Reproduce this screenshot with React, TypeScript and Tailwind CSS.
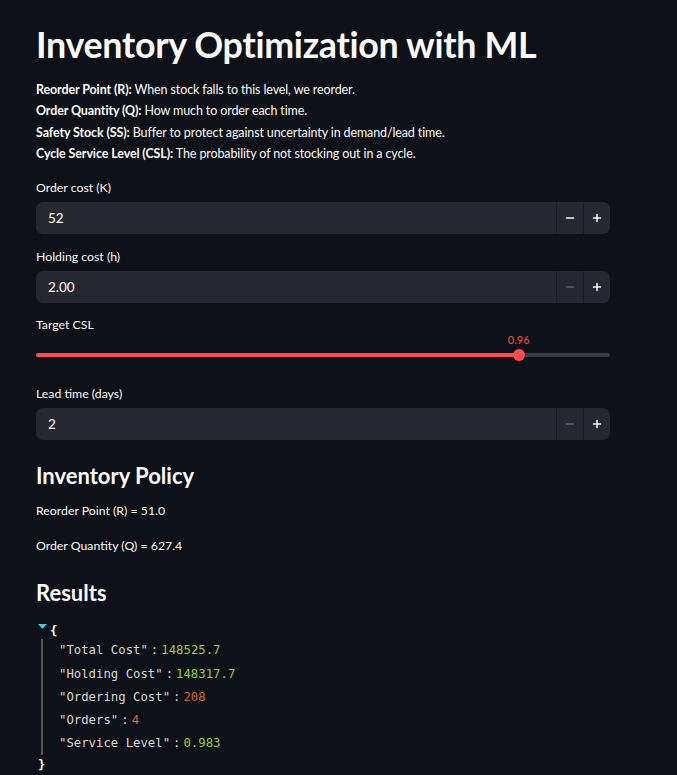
import React from 'react';
import { Minus, Plus } from 'lucide-react';

const sans = { fontFamily: 'Lato, "Noto Sans", sans-serif' };
const mono = { fontFamily: '"DejaVu Sans Mono", "Liberation Mono", monospace' };

const NumberField: React.FC<{ label: string; value: string; minusOff?: boolean; mt: string }> = ({ label, value, minusOff, mt }) => (
  <div className={mt}>
    <div className="text-[12.3px] leading-[16px] h-[16px]">{label}</div>
    <div className="mt-[6px] h-[32px] rounded-[7px] bg-[#262730] flex items-stretch overflow-hidden">
      <div className="flex-1 flex items-center pl-[12px] text-[13.5px]">{value}</div>
      <div className="w-[27px] flex items-center justify-center border-l border-[#1c1d24]">
        <Minus size={12} strokeWidth={3} className={minusOff ? 'text-[#5d5f68]' : 'text-[#fafafa]'} />
      </div>
      <div className="w-[27px] flex items-center justify-center border-l border-[#1c1d24]">
        <Plus size={12} strokeWidth={3} className="text-[#fafafa]" />
      </div>
    </div>
  </div>
);

const rows: { k: string; v: string; c: string }[] = [
  { k: 'Total Cost', v: '148525.7', c: 'text-[#9fcb35]' },
  { k: 'Holding Cost', v: '148317.7', c: 'text-[#9fcb35]' },
  { k: 'Ordering Cost', v: '208', c: 'text-[#cc6a32]' },
  { k: 'Orders', v: '4', c: 'text-[#cc6a32]' },
  { k: 'Service Level', v: '0.983', c: 'text-[#9fcb35]' },
];

export default function App() {
  const pct = 84.1;
  return (
    <div className="min-h-screen bg-[#0e1117] text-[#fafafa]" style={sans}>
      <div className="w-[574px] ml-[36px] pt-[23px] pb-[10px]">
        <h1 className="text-[35.8px] leading-[44px] h-[44px] font-bold tracking-[-0.3px]">Inventory Optimization with ML</h1>

        <div className="mt-[11.5px] text-[12.5px] leading-[21.5px] tracking-[-0.12px]">
          <p><b>Reorder Point (R):</b> When stock falls to this level, we reorder.</p>
          <p><b>Order Quantity (Q):</b> How much to order each time.</p>
          <p><b>Safety Stock (SS):</b> Buffer to protect against uncertainty in demand/lead time.</p>
          <p><b>Cycle Service Level (CSL):</b> The probability of not stocking out in a cycle.</p>
        </div>

        <NumberField label="Order cost (K)" value="52" mt="mt-[15.5px]" />
        <NumberField label="Holding cost (h)" value="2.00" minusOff mt="mt-[15px]" />

        <div className="mt-[14px]">
          <div className="text-[12.3px] leading-[16px] h-[16px]">Target CSL</div>
          <div className="relative h-[30px]">
            <div
              className="absolute top-0 text-[11px] leading-[14px] text-[#ff4b4b] -translate-x-1/2"
              style={{ left: `${pct}%` }}
            >
              0.96
            </div>
            <div className="absolute left-0 right-0 top-[20px] h-[4px] rounded-full bg-[#3a3c44]" />
            <div className="absolute left-0 top-[20px] h-[4px] rounded-full bg-[#ff4b4b]" style={{ width: `${pct}%` }} />
            <div
              className="absolute top-[16px] w-[12px] h-[12px] rounded-full bg-[#ff4b4b] -translate-x-1/2"
              style={{ left: `${pct}%` }}
            />
          </div>
        </div>

        <NumberField label="Lead time (days)" value="2" minusOff mt="mt-[23px]" />

        <h2 className="mt-[20px] text-[22px] leading-[32px] font-bold">Inventory Policy</h2>
        <p className="mt-[9px] text-[12.3px] leading-[20px]">Reorder Point (R) = 51.0</p>
        <p className="mt-[15px] text-[12.3px] leading-[20px]">Order Quantity (Q) = 627.4</p>

        <h2 className="mt-[21px] text-[22px] leading-[32px] font-bold">Results</h2>

        <div className="mt-[12px] text-[12.3px]" style={mono}>
          <div className="h-[18px] flex items-center">
            <svg width="9" height="6" viewBox="0 0 9 6" className="ml-[2px] -mt-[6px]">
              <path d="M0 0 L9 0 L4.5 5 Z" fill="#4fc1e9" />
            </svg>
            <span className="ml-[3px] font-bold">{'{'}</span>
          </div>
          <div className="ml-[5px] border-l-2 border-[#58554d] pl-[16px]">
            {rows.map(r => (
              <div key={r.k} className="h-[23.2px] flex items-center">
                <span className="text-[#d8d8d8]">"{r.k}"</span>
                <span className="ml-[3px] mr-[3px] text-[#d8d8d8]">:</span>
                <span className={r.c}>{r.v}</span>
              </div>
            ))}
          </div>
          <div className="h-[18px] flex items-center ml-[2px] font-bold">{'}'}</div>
        </div>
      </div>
    </div>
  );
}
